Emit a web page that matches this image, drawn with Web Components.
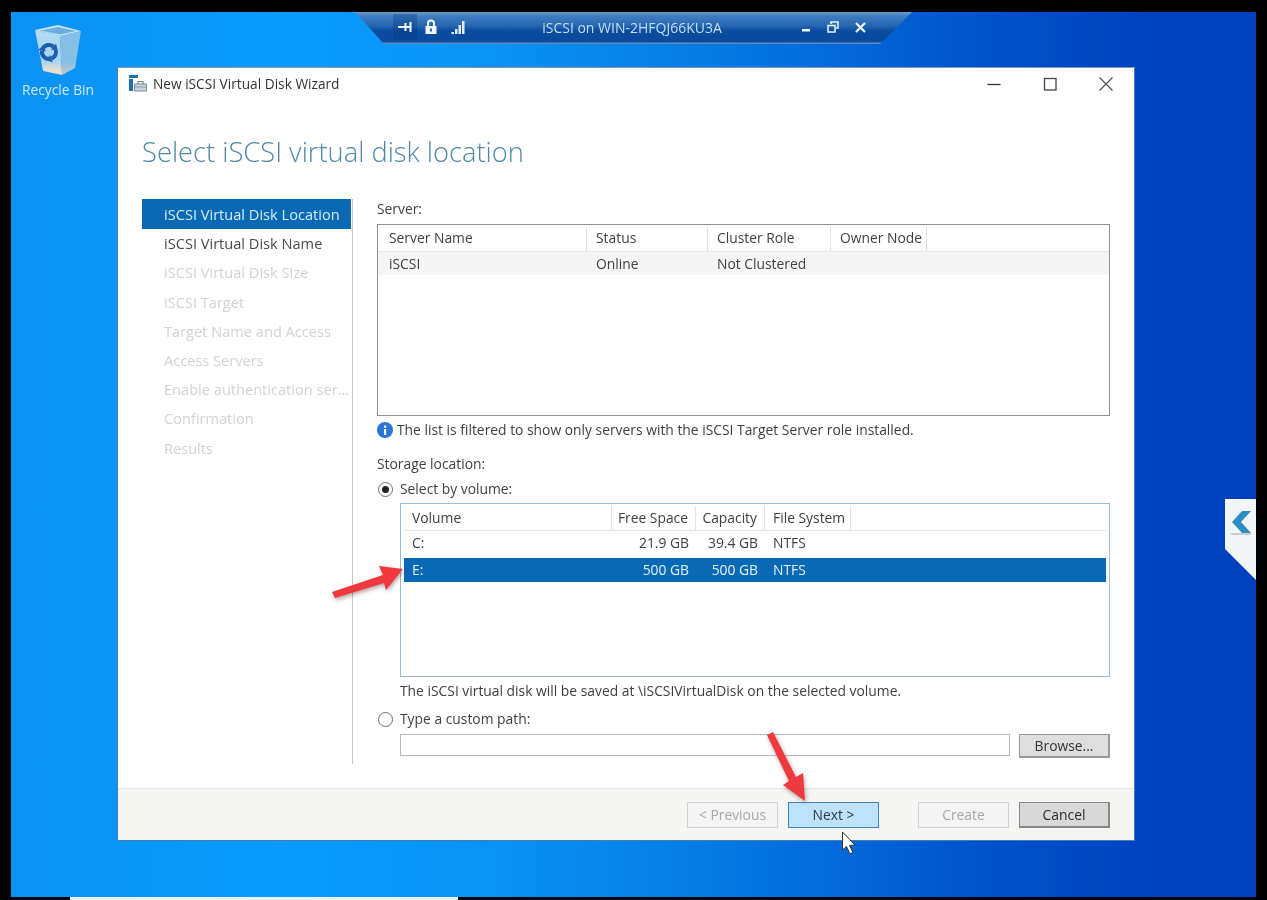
<!DOCTYPE html>
<html lang="en">
<head>
<meta charset="utf-8">
<title>New iSCSI Virtual Disk Wizard</title>
<style>
    html, body { margin: 0; height: 100%; background: #000; overflow: hidden; }
    body { font-family: "Open Sans", "Liberation Sans", sans-serif; }
</style>
</head>
<body>
<rdp-desktop>
    <connection-bar slot="overlay" title="iSCSI on WIN-2HFQJ66KU3A"></connection-bar>
    <recycle-bin slot="overlay"></recycle-bin>
    <side-tab slot="overlay"></side-tab>
    <wizard-window slot="overlay" title="New iSCSI Virtual Disk Wizard" heading="Select iSCSI virtual disk location">
        <wizard-nav slot="nav" active="iSCSI Virtual Disk Location"
            enabled="iSCSI Virtual Disk Location|iSCSI Virtual Disk Name"
            disabled="iSCSI Virtual Disk Size|iSCSI Target|Target Name and Access|Access Servers|Enable authentication ser...|Confirmation|Results"></wizard-nav>
        <location-form slot="content"></location-form>
        <wizard-button slot="footer" label="&lt; Previous" kind="disabled"></wizard-button>
        <wizard-button slot="footer" label="Next &gt;" kind="hover"></wizard-button>
        <wizard-button slot="footer" label="Create" kind="disabled" style="margin-left:29px"></wizard-button>
        <wizard-button slot="footer" label="Cancel" kind="default"></wizard-button>
    </wizard-window>
    <screen-annotations slot="overlay"></screen-annotations>
</rdp-desktop>

<script>
class RdpDesktop extends HTMLElement {
    connectedCallback() {
        this.attachShadow({ mode: 'open' });
        this.shadowRoot.innerHTML = `
            <style>
                :host {
                    display: block;
                    position: relative;
                    margin: 12px 11px 0 11px;
                    height: 885px;
                    filter: blur(0.35px);
                    background: linear-gradient(90deg, #0b92f2 0%, #0a9cfd 22%, #0a93f5 38%, #0578e2 58%, #0053cb 78%, #0042be 92%, #0040bc 100%);
                }
                .strip {
                    position: absolute;
                    left: 59px;
                    top: 885px;
                    width: 388px;
                    height: 3px;
                    background: #eef3f6;
                }
            </style>
            <slot name="overlay"></slot>
            <div class="strip"></div>
        `;
    }
}

class ConnectionBar extends HTMLElement {
    connectedCallback() {
        this.attachShadow({ mode: 'open' });
        this.shadowRoot.innerHTML = `
            <style>
                :host {
                    display: block;
                    position: absolute;
                    left: 344px;
                    top: 0;
                    width: 557px;
                    height: 32px;
                    color: #c6dff5;
                    font: 14px "Open Sans", "Liberation Sans", sans-serif;
                }
                .bar {
                    display: flex;
                    align-items: center;
                    height: 100%;
                    padding: 0 0 2px 38px;
                    box-sizing: border-box;
                    background: linear-gradient(180deg, #6a9ccf 0%, #3f7bc0 14%, #2768b2 42%, #0c4d9f 58%, #0a4a9c 92%, #6f9ccb 100%);
                    clip-path: polygon(0 0, 100% 0, 525px 100%, 29px 100%);
                }
                svg { display: block; flex: none; }
                .pin {
                    display: flex;
                    align-items: center;
                    justify-content: center;
                    flex: none;
                    width: 24px;
                    height: 26px;
                    background: rgba(0, 50, 120, .3);
                }
                .title { width: 246px; margin-left: 43px; text-align: center; white-space: nowrap; }
            </style>
            <div class="bar">
                <span class="pin">
                    <svg width="16" height="14" viewBox="0 0 16 14" fill="none" stroke="#eef6fd" stroke-width="2"><path d="M1 7h13M8.500 3v8M13.500 2v10"/></svg>
                </span>
                <svg width="14" height="16" viewBox="0 0 14 16" style="margin-left:7px"><path d="M4 7V4.500a3 3 0 0 1 6 0V7" fill="none" stroke="#eef6fd" stroke-width="2"/><rect x="1.500" y="7" width="11" height="8" fill="#eef6fd"/><rect x="6" y="9.500" width="2" height="3" fill="#2a67ac"/></svg>
                <svg width="15" height="15" viewBox="0 0 15 15" fill="#dfeefb" style="margin-left:13px"><rect x="0.500" y="12" width="2.500" height="2"/><rect x="4" y="9" width="2.500" height="5"/><rect x="7.500" y="5" width="2.500" height="9"/><rect x="11" y="1" width="2.500" height="13"/></svg>
                <span class="title">${this.getAttribute('title')}</span>
                <svg width="10" height="10" viewBox="0 0 10 10" style="margin-left:46px"><rect x="1" y="7" width="8" height="2.500" fill="#eef6fd"/></svg>
                <svg width="12" height="12" viewBox="0 0 12 12" fill="none" stroke="#eef6fd" stroke-width="1.500" style="margin-left:16px"><rect x="1" y="4.500" width="7" height="6.500"/><path d="M4 3V1h7v6H9"/></svg>
                <svg width="11" height="11" viewBox="0 0 11 11" fill="none" stroke="#f4f9fe" stroke-width="2.200" style="margin-left:16px"><path d="M1 1l9 9M10 1l-9 9"/></svg>
            </div>
        `;
    }
}

class RecycleBin extends HTMLElement {
    connectedCallback() {
        this.attachShadow({ mode: 'open' });
        this.shadowRoot.innerHTML = `
            <style>
                :host {
                    display: flex;
                    flex-direction: column;
                    align-items: center;
                    position: absolute;
                    left: 1px;
                    top: 12px;
                    width: 92px;
                    color: #cdeaff;
                    font: 13.8px "Open Sans", "Liberation Sans", sans-serif;
                }
                svg { display: block; }
                span { margin-top: 3px; line-height: 18px; white-space: nowrap; }
            </style>
            <svg width="48" height="54" viewBox="0 0 48 54">
                <defs>
                    <linearGradient id="face" x1="0" y1="0" x2="0" y2="1">
                        <stop offset="0" stop-color="#b4dcf5"/>
                        <stop offset="0.68" stop-color="#a6d3ef"/>
                        <stop offset="0.88" stop-color="#e4dcd2"/>
                        <stop offset="1" stop-color="#e6dfd6"/>
                    </linearGradient>
                    <linearGradient id="side" x1="0" y1="0" x2="0" y2="1">
                        <stop offset="0" stop-color="#84c0e8"/>
                        <stop offset="0.7" stop-color="#86bfe4"/>
                        <stop offset="1" stop-color="#c6c8c8"/>
                    </linearGradient>
                </defs>
                <path d="M1 6L9 47L28 51L26 12Z" fill="url(#face)"/>
                <path d="M26 12L47 7L41 44L28 51Z" fill="url(#side)"/>
                <path d="M1 6L24 1L47 7L26 12Z" fill="#c8e4f6"/>
                <path d="M6 6.500L24 3L42 7L26 10.500Z" fill="#6eaedc"/>
                <g id="arc" fill="#1a5fb0">
                    <path d="M8.900 24.500A7 7 0 0 1 19.500 22.600" fill="none" stroke="#1a5fb0" stroke-width="4"/>
                    <path d="M22.100 19.500L16.900 25.700L23.400 25.800Z"/>
                </g>
                <g fill="#1a5fb0" transform="rotate(120 15 28)">
                    <path d="M8.900 24.500A7 7 0 0 1 19.500 22.600" fill="none" stroke="#1a5fb0" stroke-width="4"/>
                    <path d="M22.100 19.500L16.900 25.700L23.400 25.800Z"/>
                </g>
                <g fill="#1a5fb0" transform="rotate(240 15 28)">
                    <path d="M8.900 24.500A7 7 0 0 1 19.500 22.600" fill="none" stroke="#1a5fb0" stroke-width="4"/>
                    <path d="M22.100 19.500L16.900 25.700L23.400 25.800Z"/>
                </g>
            </svg>
            <span>Recycle Bin</span>
        `;
    }
}

class SideTab extends HTMLElement {
    connectedCallback() {
        this.attachShadow({ mode: 'open' });
        this.shadowRoot.innerHTML = `
            <style>
                :host {
                    display: block;
                    position: absolute;
                    left: 1214px;
                    top: 487px;
                    width: 31px;
                    height: 81px;
                }
                svg { display: block; }
            </style>
            <svg width="31" height="81" viewBox="0 0 31 81">
                <path d="M0 0H31V81L0 50Z" fill="#f3f6f8"/>
                <path d="M17 12h9L16 23L26 34h-9L7 23Z" fill="#2b8fc4"/>
                <path d="M6 35h20" stroke="#9aa4ab" stroke-width="1"/>
            </svg>
        `;
    }
}

class WizardWindow extends HTMLElement {
    connectedCallback() {
        this.attachShadow({ mode: 'open' });
        this.shadowRoot.innerHTML = `
            <style>
                :host {
                    display: flex;
                    flex-direction: column;
                    position: absolute;
                    left: 106px;
                    top: 55px;
                    width: 1018px;
                    height: 774px;
                    box-sizing: border-box;
                    background: #fff;
                    border: 1px solid #3d7fb4;
                    border-top-color: #7d99b8;
                    color: #3f3f3f;
                    font: 13.85px/20px "Open Sans", "Liberation Sans", sans-serif;
                }
                .titlebar {
                    display: flex;
                    align-items: center;
                    height: 31px;
                    margin-bottom: 4px;
                    flex: none;
                    padding-left: 11px;
                    color: #333;
                }
                .titlebar .text { margin-left: 5px; white-space: nowrap; font-size: 13.7px; }
                .controls { display: flex; margin-left: auto; margin-right: 18px; gap: 36px; align-items: center; }
                .controls svg { display: block; }
                h1 {
                    margin: 29px 0 0 24px;
                    font-size: 27.3px;
                    line-height: 40px;
                    font-weight: 300;
                    color: #4f8ba8;
                    white-space: nowrap;
                }
                .body { display: flex; flex: none; height: 565px; margin: 27px 0 0 24px; }
                footer {
                    display: flex;
                    align-items: center;
                    justify-content: flex-end;
                    gap: 10px;
                    margin-top: auto;
                    height: 52px;
                    box-sizing: border-box;
                    padding: 1px 24px 0 0;
                    background: #f5f5f4;
                    border-top: 1px solid #e4e4e4;
                }
            </style>
            <div class="titlebar">
                <svg width="19" height="17" viewBox="0 0 19 17">
                    <rect x="0" y="0" width="9" height="3" fill="#1f6fb8"/>
                    <rect x="0" y="4" width="4" height="12" fill="#1f6fb8"/>
                    <path d="M5.500 9h12v7h-12Z" fill="#c9d3dc" stroke="#7a8b9a" stroke-width="1"/>
                    <path d="M9 9V6.500h5V9" fill="none" stroke="#7a8b9a" stroke-width="1.200"/>
                    <path d="M5.500 12h12" stroke="#8c9aa7" stroke-width="1"/>
                </svg>
                <span class="text">${this.getAttribute('title')}</span>
                <div class="controls">
                    <svg width="20" height="20" viewBox="0 0 20 20"><path d="M3.500 10.500h13" stroke="#333" stroke-width="1.300"/></svg>
                    <svg width="20" height="20" viewBox="0 0 20 20"><rect x="4.500" y="4.500" width="11.500" height="11.500" fill="none" stroke="#444" stroke-width="1.300"/></svg>
                    <svg width="20" height="20" viewBox="0 0 20 20"><path d="M3.500 3.500l13 13M16.500 3.500l-13 13" stroke="#555" stroke-width="1.300"/></svg>
                </div>
            </div>
            <h1>${this.getAttribute('heading')}</h1>
            <div class="body">
                <slot name="nav"></slot>
                <slot name="content"></slot>
            </div>
            <footer><slot name="footer"></slot></footer>
        `;
    }
}

class WizardNav extends HTMLElement {
    connectedCallback() {
        const active = this.getAttribute('active');
        const item = (label, off) => `<div class="item${label === active ? ' active' : ''}${off ? ' off' : ''}">${label}</div>`;
        this.attachShadow({ mode: 'open' });
        this.shadowRoot.innerHTML = `
            <style>
                :host {
                    display: block;
                    flex: none;
                    width: 211px;
                    box-sizing: border-box;
                    border-right: 1px solid #c8c8c8;
                    font-size: 14.6px;
                }
                .item {
                    height: 29.200px;
                    line-height: 30px;
                    padding-left: 22px;
                    margin-right: 1px;
                    white-space: nowrap;
                    color: #4a4a4a;
                }
                .item.active { background: #0a69b4; color: #d5ecfb; height: 30px; margin-bottom: -0.800px; }
                .item.off { color: #d2d2d2; }
            </style>
            ${this.getAttribute('enabled').split('|').map(l => item(l, false)).join('')}
            ${this.getAttribute('disabled').split('|').map(l => item(l, true)).join('')}
        `;
    }
}

// columns: "label:width[:r]" separated by |, rows: cells by , and rows by |
class DataList extends HTMLElement {
    connectedCallback() {
        const cols = this.getAttribute('columns').split('|').map(c => c.split(':'));
        const selected = this.getAttribute('selected');
        const cell = (text, i) => {
            const right = cols[i][2] === 'r';
            return `<div class="cell${right ? ' right' : ''}" style="width:${cols[i][1]}px">${text}</div>`;
        };
        const rows = this.getAttribute('rows').split('|').map(r => {
            const cells = r.split(',');
            return `<div class="row ${cells[0] === selected ? 'selected' : ''}">${cells.map(cell).join('')}</div>`;
        }).join('');
        this.attachShadow({ mode: 'open' });
        this.shadowRoot.innerHTML = `
            <style>
                :host {
                    display: block;
                    box-sizing: border-box;
                    border: 1px solid var(--list-border, #8f8f8f);
                    padding: 1px var(--list-inset, 0px);
                    overflow: hidden;
                }
                .head, .row { display: flex; align-items: center; }
                .head { height: 25px; border-bottom: 1px solid #e6e6e6; box-sizing: content-box; }
                .head .cell { border-right: 1px solid #e2e2e2; height: 24px; line-height: var(--head-line, 24px); }
                .cell { box-sizing: border-box; flex: none; padding: 0 7px 0 var(--cell-pad, 8px); white-space: nowrap; overflow: hidden; }
                .cell.right { text-align: right; padding-left: 0; }
                .cell:first-child { padding-left: var(--first-pad, 8px); }
                .rows { display: flex; flex-direction: column; gap: var(--row-gap, 0px); }
                .row { height: var(--row-h, 24px); background: var(--row-bg, transparent); }
                .row.selected { background: #0a69b4; color: #e4f2fc; }
            </style>
            <div class="head">${cols.map((c, i) => cell(c[0], i)).join('')}</div>
            <div class="rows">${rows}</div>
        `;
    }
}

class WizardRadio extends HTMLElement {
    connectedCallback() {
        this.attachShadow({ mode: 'open' });
        this.shadowRoot.innerHTML = `
            <style>
                :host { display: flex; align-items: center; gap: 7px; height: 20px; white-space: nowrap; }
                .dot {
                    width: 15px;
                    height: 15px;
                    margin-left: 1px;
                    box-sizing: border-box;
                    border-radius: 50%;
                    border: 1px solid #6e6e6e;
                    background: #fff;
                    display: grid;
                    place-items: center;
                }
                .dot i { width: 7px; height: 7px; border-radius: 50%; background: #222; display: ${this.hasAttribute('checked') ? 'block' : 'none'}; }
            </style>
            <span class="dot"><i></i></span>
            <span><slot></slot></span>
        `;
    }
}

class WizardButton extends HTMLElement {
    connectedCallback() {
        this.attachShadow({ mode: 'open' });
        this.shadowRoot.innerHTML = `
            <style>
                :host {
                    display: block;
                    flex: none;
                    width: 91px;
                    height: 26px;
                    box-sizing: border-box;
                    border: 1px solid #b4b4b4;
                    background: #e3e3e3;
                    color: #333;
                    text-align: center;
                    line-height: 24px;
                    white-space: nowrap;
                }
                :host([kind="disabled"]) { background: #f4f4f4; border-color: #cfcfcf; color: #a8a8a8; }
                :host([kind="hover"]) { background: #bde2fa; border-color: #3c86bb; color: #2b3a46; }
                :host([kind="default"]) { background: #d8d8d8; border: 1px solid #888; border-width: 1px 2px 2px 1px; color: #2b2b2b; }
            </style>
            ${this.getAttribute('label').replace('<', '&lt;')}
        `;
    }
}

class LocationForm extends HTMLElement {
    connectedCallback() {
        this.attachShadow({ mode: 'open' });
        this.shadowRoot.innerHTML = `
            <style>
                :host { display: block; flex: none; width: 733px; margin-left: 24px; }
                .line { height: 20px; white-space: nowrap; }
                .info { display: flex; align-items: center; gap: 4px; margin-top: 4px; }
                .info svg { display: block; flex: none; }
                .server-list {
                    height: 192px;
                    margin-top: 5px;
                    --first-pad: 11px;
                    --cell-pad: 9px;
                    --head-line: 22px;
                    --row-h: 23px;
                    --row-bg: #f5f5f5;
                }
                .volume-list {
                    height: 174px;
                    margin: 4px 0 0 23px;
                    --list-border: #97bfd6;
                    --list-inset: 3px;
                    --cell-pad: 8px;
                    --row-h: 24px;
                    --row-gap: 3px;
                }
                .indent { margin-left: 23px; }
                .path { display: flex; gap: 9px; align-items: flex-start; margin: 5px 0 0 23px; }
                .path .input { width: 611px; height: 22px; box-sizing: border-box; border: 1px solid #b8b8b8; background: #fff; }
                .path wizard-button { height: 24px; line-height: 22px; border-color: #9a9a9a; border-width: 1px 2px 2px 1px; background: #dedede; }
            </style>
            <div class="line">Server:</div>
            <data-list class="server-list"
                columns="Server Name:209|Status:121|Cluster Role:123|Owner Node:96"
                rows="iSCSI,Online,Not Clustered,"></data-list>
            <div class="line info">
                <svg width="16" height="16" viewBox="0 0 16 16"><circle cx="8" cy="8" r="8" fill="#2b76d8"/><rect x="7" y="7" width="2.200" height="6" fill="#fff"/><rect x="7" y="3.500" width="2.200" height="2.200" fill="#fff"/></svg>
                <span>The list is filtered to show only servers with the iSCSI Target Server role installed.</span>
            </div>
            <div class="line" style="margin-top:14px">Storage location:</div>
            <wizard-radio checked style="margin-top:5px">Select by volume:</wizard-radio>
            <data-list class="volume-list"
                columns="Volume:208|Free Space:84:r|Capacity:69:r|File System:86"
                rows="C:,21.9 GB,39.4 GB,NTFS|E:,500 GB,500 GB,NTFS"
                selected="E:"></data-list>
            <div class="line indent" style="margin-top:4px">The iSCSI virtual disk will be saved at \\iSCSIVirtualDisk on the selected volume.</div>
            <wizard-radio style="margin-top:8px">Type a custom path:</wizard-radio>
            <div class="path">
                <div class="input"></div>
                <wizard-button label="Browse..." kind="normal"></wizard-button>
            </div>
        `;
    }
}

class ScreenAnnotations extends HTMLElement {
    connectedCallback() {
        this.attachShadow({ mode: 'open' });
        this.shadowRoot.innerHTML = `
            <style>
                :host {
                    display: block;
                    position: absolute;
                    inset: 0;
                    pointer-events: none;
                }
                svg { position: absolute; left: -11px; top: -12px; overflow: visible; }
                .arrow { fill: #f0393c; filter: drop-shadow(1px 2px 2px rgba(90,40,40,.45)); }
            </style>
            <svg width="1267" height="900" viewBox="0 0 1267 900">
                <path class="arrow" d="M332 592L383 575L379 566L403 569L386 590L384 583L335 598Z"/>
                <path class="arrow" d="M767 735L773 732L796 777L803 773L805 801L783 785L789 781Z"/>
                <path d="M842.500 832V850L846.500 846.500L850 854L853 852.500L849.500 845.500L855 845Z" fill="#fff" stroke="#333" stroke-width="1"/>
            </svg>
        `;
    }
}

customElements.define('rdp-desktop', RdpDesktop);
customElements.define('connection-bar', ConnectionBar);
customElements.define('recycle-bin', RecycleBin);
customElements.define('side-tab', SideTab);
customElements.define('wizard-window', WizardWindow);
customElements.define('wizard-nav', WizardNav);
customElements.define('data-list', DataList);
customElements.define('wizard-radio', WizardRadio);
customElements.define('wizard-button', WizardButton);
customElements.define('location-form', LocationForm);
customElements.define('screen-annotations', ScreenAnnotations);
</script>
</body>
</html>
